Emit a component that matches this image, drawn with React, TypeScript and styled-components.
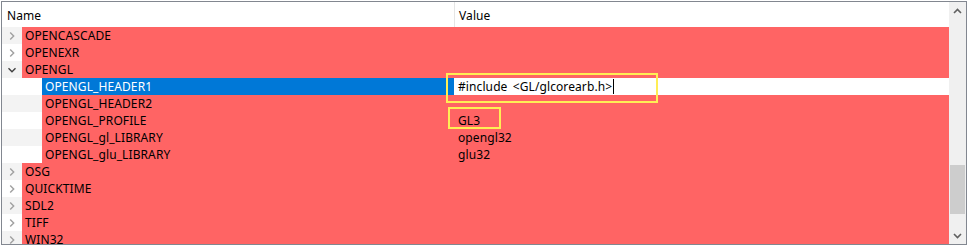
import React from "react";
import styled, { createGlobalStyle } from "styled-components";

const GlobalStyle = createGlobalStyle`
  html, body {
    margin: 0;
    padding: 0;
    background: #ffffff;
  }
  body {
    font-family: "Noto Sans", "Liberation Sans", sans-serif;
    font-size: 12px;
    letter-spacing: 0.1px;
  }
`;

const Page = styled.div`
  padding: 1px 0 0 1px;
  width: 970px;
  height: 246px;
  box-sizing: border-box;
`;

const Frame = styled.div`
  position: relative;
  width: 966px;
  height: 244px;
  box-sizing: border-box;
  border: 1px solid #828790;
  display: flex;
  overflow: hidden;
`;

const Main = styled.div`
  flex: 1;
  display: flex;
  flex-direction: column;
  min-width: 0;
`;

const Header = styled.div`
  height: 25px;
  display: flex;
  background: #ffffff;
  color: #000;
`;

const HeaderCell = styled.div<{ $width?: number }>`
  ${(p) => (p.$width ? `width: ${p.$width}px;` : "flex: 1;")}
  box-sizing: border-box;
  padding-left: ${(p) => (p.$width ? 5 : 4)}px;
  display: flex;
  align-items: center;
  border-right: ${(p) => (p.$width ? "1px solid #e5e5e5" : "none")};
  padding-top: 1px;
`;

const Body = styled.div`
  flex: 1;
  overflow: hidden;
`;

const Row = styled.div`
  height: 17px;
  display: flex;
`;

const Gutter = styled.div<{ $width: number; $alt: boolean }>`
  width: ${(p) => p.$width}px;
  flex: none;
  background: ${(p) => (p.$alt ? "#f3f3f3" : "#ffffff")};
  display: flex;
  align-items: center;
  padding-left: 5px;
  box-sizing: border-box;
`;

const NameCell = styled.div<{ $width: number; $selected: boolean }>`
  width: ${(p) => p.$width}px;
  flex: none;
  background: ${(p) => (p.$selected ? "#0078d7" : "#ff6464")};
  color: ${(p) => (p.$selected ? "#ffffff" : "#000000")};
  padding-left: 3px;
  box-sizing: border-box;
  line-height: 17px;
  white-space: nowrap;
`;

const ValueCell = styled.div<{ $editing: boolean }>`
  flex: 1;
  background: ${(p) => (p.$editing ? "#ffffff" : "#ff6464")};
  color: #000;
  padding-left: ${(p) => (p.$editing ? 3 : 4)}px;
  margin-left: ${(p) => (p.$editing ? 1 : 0)}px;
  line-height: 17px;
  white-space: pre;
  word-spacing: 2px;
  display: flex;
  align-items: center;
`;

const Caret = styled.span`
  display: inline-block;
  width: 1px;
  height: 15px;
  background: #000;
  margin-left: 1px;
`;

const Scrollbar = styled.div`
  width: 17px;
  flex: none;
  background: #f0f0f0;
  display: flex;
  flex-direction: column;
  align-items: center;
`;

const ArrowBox = styled.div`
  height: 17px;
  width: 17px;
  display: flex;
  align-items: center;
  justify-content: center;
`;

const Track = styled.div`
  flex: 1;
  width: 15px;
  display: flex;
  flex-direction: column;
  justify-content: flex-end;
  padding-bottom: 13px;
`;

const Thumb = styled.div`
  height: 49px;
  background: #cdcdcd;
`;

const Highlight = styled.div<{ $x: number; $y: number; $w: number; $h: number }>`
  position: absolute;
  left: ${(p) => p.$x}px;
  top: ${(p) => p.$y}px;
  width: ${(p) => p.$w}px;
  height: ${(p) => p.$h}px;
  border: 2px solid #ffee55;
  box-sizing: border-box;
  pointer-events: none;
`;

const Chevron = ({ open }: { open: boolean }) =>
  open ? (
    <svg width="10" height="10" viewBox="0 0 10 10">
      <path d="M1.5 3.2 L5 6.7 L8.5 3.2" fill="none" stroke="#404040" strokeWidth="1.4" />
    </svg>
  ) : (
    <svg width="10" height="10" viewBox="0 0 10 10">
      <path d="M3.2 1.5 L6.7 5 L3.2 8.5" fill="none" stroke="#a0a0a0" strokeWidth="1.4" />
    </svg>
  );

interface Entry {
  name: string;
  value?: string;
  depth: number;
  open?: boolean;
  selected?: boolean;
}

const entries: Entry[] = [
  { name: "OPENCASCADE", depth: 0 },
  { name: "OPENEXR", depth: 0 },
  { name: "OPENGL", depth: 0, open: true },
  { name: "OPENGL_HEADER1", value: "#include <GL/glcorearb.h>", depth: 1, selected: true },
  { name: "OPENGL_HEADER2", value: "", depth: 1 },
  { name: "OPENGL_PROFILE", value: "GL3", depth: 1 },
  { name: "OPENGL_gl_LIBRARY", value: "opengl32", depth: 1 },
  { name: "OPENGL_glu_LIBRARY", value: "glu32", depth: 1 },
  { name: "OSG", depth: 0 },
  { name: "QUICKTIME", depth: 0 },
  { name: "SDL2", depth: 0 },
  { name: "TIFF", depth: 0 },
  { name: "WIN32", depth: 0 },
];

const NAME_COL = 452;

export default function App() {
  return (
    <Page>
      <GlobalStyle />
      <Frame>
        <Main>
          <Header>
            <HeaderCell $width={NAME_COL + 1}>Name</HeaderCell>
            <HeaderCell>Value</HeaderCell>
          </Header>
          <Body>
            {entries.map((e, i) => {
              const gutter = 20 + e.depth * 20;
              return (
                <Row key={e.name}>
                  <Gutter $width={gutter} $alt={i % 2 === 0}>
                    {e.depth === 0 && <Chevron open={!!e.open} />}
                  </Gutter>
                  <NameCell $width={NAME_COL - gutter} $selected={!!e.selected}>
                    {e.name}
                  </NameCell>
                  <ValueCell $editing={!!e.selected}>
                    {e.value}
                    {e.selected && <Caret />}
                  </ValueCell>
                </Row>
              );
            })}
          </Body>
        </Main>
        <Scrollbar>
          <ArrowBox>
            <svg width="9" height="6" viewBox="0 0 9 6">
              <path d="M1 5 L4.5 1.5 L8 5" fill="none" stroke="#606060" strokeWidth="1.6" />
            </svg>
          </ArrowBox>
          <Track>
            <Thumb />
          </Track>
          <ArrowBox>
            <svg width="9" height="6" viewBox="0 0 9 6">
              <path d="M1 1 L4.5 4.5 L8 1" fill="none" stroke="#606060" strokeWidth="1.6" />
            </svg>
          </ArrowBox>
        </Scrollbar>
        <Highlight $x={444} $y={71} $w={212} $h={30} />
        <Highlight $x={446} $y={105} $w={53} $h={22} />
      </Frame>
    </Page>
  );
}
